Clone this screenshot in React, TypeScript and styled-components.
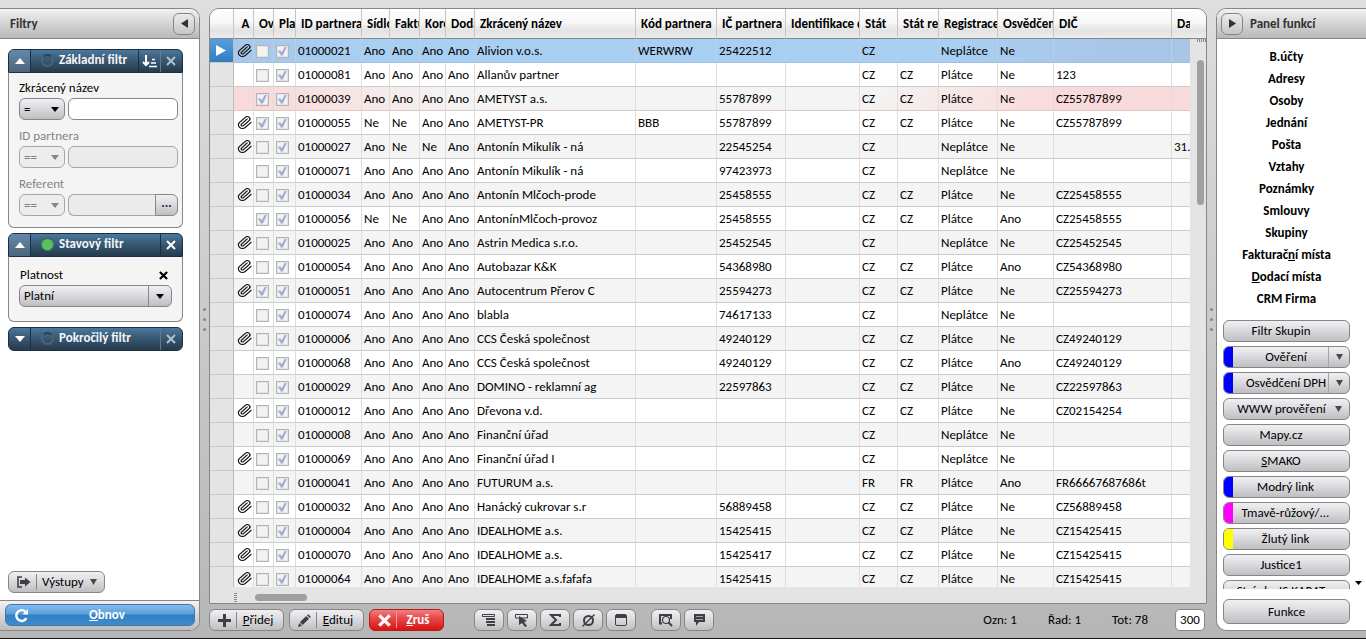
import React from 'react';
import styled, { createGlobalStyle, css } from 'styled-components';

const GlobalStyle = createGlobalStyle`
  *, *::before, *::after { box-sizing: border-box; }
  body { margin: 0; }
  body, button, input, select {
    font-family: Calibri, Carlito, Lato, sans-serif;
    font-size: 13px;
    line-height: 16px;
    color: #000;
  }
`;

const raised = css`
  border: 1px solid #868686;
  border-radius: 6px;
  background: linear-gradient(#f0eff2, #dedde1 40%, #bfbec1);
`;

const Shell = styled.div`
  display: flex;
  height: 100vh;
  min-height: 500px;
  padding: 8px 0 7px;
  background: linear-gradient(#dedede, #b6b6b6);
  border-bottom: 1px solid #151515;
  overflow: hidden;
`;

/* ---------- side panels ---------- */

const Panel = styled.aside<{ $side: 'left' | 'right' }>`
  flex: none;
  display: flex;
  flex-direction: column;
  width: ${p => (p.$side === 'left' ? 200 : 150)}px;
  background: #fff;
  border: 1px solid #868686;
  overflow: hidden;
  ${p => (p.$side === 'left'
    ? 'border-left: 0; border-radius: 0 10px 10px 0;'
    : 'border-right: 0; border-radius: 10px 0 0 10px;')}
`;

const PanelHeader = styled.header<{ $side: 'left' | 'right' }>`
  flex: none;
  display: flex;
  align-items: center;
  justify-content: ${p => (p.$side === 'left' ? 'space-between' : 'flex-start')};
  gap: 7px;
  height: 30px;
  padding: ${p => (p.$side === 'left' ? '0 4px 0 10px' : '0 4px')};
  border-bottom: 1px solid #868686;
  background: linear-gradient(#f2f2f2, #dcdcdc 35%, #b9b9b9);
`;

const PanelTitle = styled.h2`
  margin: 0;
  font-size: 13px;
  color: #333;
`;

const CollapseButton = styled.button`
  display: grid;
  place-items: center;
  width: 22px;
  height: 22px;
  padding: 0;
  border: 1px solid #868686;
  border-radius: 6px;
  background: linear-gradient(#ebebeb, #c6c6c6);
`;

const Splitter = styled.div`
  flex: none;
  display: flex;
  flex-direction: column;
  align-items: center;
  justify-content: center;
  gap: 7px;
  width: 9px;
`;

const Dot = styled.i`
  width: 3px;
  height: 3px;
  border-radius: 50%;
  background: #858585;
`;

/* ---------- filters ---------- */

const FilterList = styled.div`
  flex: 1;
  min-height: 0;
  display: flex;
  flex-direction: column;
  gap: 5px;
  padding: 10px 16px 0 8px;
  overflow: hidden;
`;

const FilterCard = styled.section`
  flex: none;
`;

const FilterHead = styled.header<{ $closed?: boolean }>`
  display: flex;
  height: 24px;
  border: 1px solid #1b2f41;
  border-radius: ${p => (p.$closed ? '6px' : '6px 6px 0 0')};
  background: linear-gradient(#4b789d, #3b5c78 40%, #263b4d);
  overflow: hidden;
`;

const HeadButton = styled.button<{ $edge: 'left' | 'right'; $lit?: boolean; $soft?: boolean }>`
  flex: none;
  display: grid;
  place-items: center;
  width: 22px;
  padding: 0 ${p => (p.$edge === 'right' ? 1 : 0)}px 0 0;
  border: 0;
  ${p => `border-${p.$edge === 'left' ? 'right' : 'left'}: 1px solid ${p.$soft ? '#66798a' : '#1b2f41'};`}
  background: ${p => (p.$lit ? 'linear-gradient(#648aab, #4c657c)' : 'transparent')};
`;

const HeadTitle = styled.h3`
  flex: 1;
  display: flex;
  align-items: center;
  gap: 5px;
  margin: 0;
  padding: 0 0 2px 10px;
  font-size: 13px;
  white-space: nowrap;
  color: #f2f5f8;
`;

const Lamp = styled.span<{ $on?: boolean }>`
  flex: none;
  width: 13px;
  height: 13px;
  border-radius: 50%;
  border: ${p => (p.$on ? 1 : 2)}px solid ${p => (p.$on ? '#3f7f62' : '#4f6474')};
  border-top-color: ${p => (p.$on ? '#33604f' : '#2b4153')};
  background: ${p => (p.$on ? '#5cc063' : 'transparent')};
`;

const FilterBody = styled.div<{ $roomy?: boolean }>`
  display: flex;
  flex-direction: column;
  gap: ${p => (p.$roomy ? 0 : 6)}px;
  padding: ${p => (p.$roomy ? '8px 10px 14px' : '5px 4px 11px 10px')};
  border: 1px solid #868686;
  border-top: 0;
  border-radius: 0 0 6px 6px;
  background: #f4f4f4;
`;

const FieldLabel = styled.label<{ $muted?: boolean }>`
  display: block;
  line-height: 20px;
  color: ${p => (p.$muted ? '#858585' : '#000')};
`;

const FieldTitleRow = styled.div`
  display: flex;
  align-items: center;
  justify-content: space-between;
  padding: 0 4px 0 1px;
`;

const PlainButton = styled.button`
  display: grid;
  place-items: center;
  padding: 0;
  border: 0;
  background: none;
`;

const FieldRow = styled.div`
  display: flex;
  gap: 3px;
`;

const SelectBox = styled.span<{ $muted?: boolean; $wide?: boolean }>`
  display: grid;
  grid-template-columns: 1fr ${p => (p.$wide ? 23 : 18)}px;
  flex: none;
  width: ${p => (p.$wide ? '100%' : '46px')};
  height: 22px;
  ${raised}
  ${p => p.$muted && 'background: #ededed; border-color: #a5a5a5;'}
`;

const Select = styled.select<{ $muted?: boolean }>`
  grid-area: 1 / 1 / 2 / 3;
  min-width: 0;
  padding: 0 0 0 4px;
  border: 0;
  appearance: none;
  background: none;
  opacity: 1;
  color: ${p => (p.$muted ? '#808080' : '#000')};
`;

const SelectCaret = styled.span<{ $split?: boolean }>`
  grid-area: 1 / 2;
  display: grid;
  place-items: center;
  pointer-events: none;
  border-left: ${p => (p.$split ? '1px solid #868686' : '0')};
`;

const TextInput = styled.input<{ $joined?: boolean }>`
  flex: 1;
  min-width: 0;
  height: 22px;
  padding: 0 4px;
  border: 1px solid #868686;
  border-radius: ${p => (p.$joined ? '6px 0 0 6px' : '6px')};
  background: #fff;
  &:disabled { background: #ebebeb; border-color: #a5a5a5; }
  ${p => p.$joined && '&&& { border-right: 0; }'}
`;

const JoinedField = styled.span`
  flex: 1;
  min-width: 0;
  display: flex;
`;

const MoreButton = styled.button`
  ${raised}
  width: 23px;
  height: 22px;
  padding: 0 0 4px;
  border-radius: 0 6px 6px 0;
  font-weight: bold;
  color: #26265c;
`;

const Outputs = styled.div`
  flex: none;
  padding: 0 8px 7px;
`;

const OutputsButton = styled.button`
  ${raised}
  display: flex;
  align-items: center;
  height: 22px;
  padding: 0 7px;
`;

const Divided = styled.span`
  margin: 0 6px 0 4px;
  padding-left: 5px;
  border-left: 1px solid #868686;
`;

const PanelFooter = styled.footer`
  flex: none;
  padding: 3px 4px 4px 5px;
  border-top: 1px solid #868686;
  background: linear-gradient(#f2f2f2, #bdbdbd);
`;

const RefreshButton = styled.button`
  display: grid;
  grid-template-columns: 16px 1fr;
  align-items: center;
  width: 100%;
  height: 22px;
  padding: 0 10px 0 8px;
  border: 1px solid #3f76a8;
  border-radius: 6px;
  background: linear-gradient(#82bbea, #5b9fda 45%, #3180c4 50%, #3e8ccd);
  color: #fff;
  font-weight: bold;
`;

/* ---------- data grid ---------- */

const Main = styled.main`
  flex: 1;
  min-width: 0;
  display: flex;
  flex-direction: column;
  gap: 5px;
`;

const GridFrame = styled.div`
  flex: 1;
  min-height: 0;
  display: grid;
  grid-template: minmax(0, 1fr) 16px / minmax(0, 1fr) 16px;
  border: 1px solid #868686;
  border-radius: 10px 10px 0 0;
  background: #e4e4e4;
  overflow: hidden;
`;

const headFill = 'linear-gradient(#fff, #f7f7f7 45%, #e3e3e3 75%, #ececec)';

const TableClip = styled.div`
  overflow: hidden;
`;

const Table = styled.table`
  width: 100%;
  min-width: 970px;
  table-layout: fixed;
  border-collapse: separate;
  border-spacing: 0;
`;

const Th = styled.th<{ $center?: boolean }>`
  height: 30px;
  padding: ${p => (p.$center ? '0 0 0 4px' : '0 0 0 5px')};
  text-align: ${p => (p.$center ? 'center' : 'left')};
  white-space: nowrap;
  overflow: hidden;
  border-right: 1px solid #c6c6c6;
  border-bottom: 1px solid #868686;
  background: ${headFill};
  &:last-child { border-right: 0; }
`;

const rowFill = {
  selected: 'radial-gradient(ellipse 50% 400% at 46% 10%, #a8cff1 60%, #a9c5e6 95%)',
  alert: 'radial-gradient(ellipse 48% 400% at 46% 10%, #f4f4f4 44%, #f9dada 85%)',
};

const Tr = styled.tr<{ $tone?: 'selected' | 'alert' }>`
  background: #fff;
  &:nth-child(odd) { background: #f4f4f4; }
  &&& { ${p => p.$tone && `background: ${rowFill[p.$tone]};`} }
`;

const Td = styled.td<{ $tone?: 'selected' | 'alert' }>`
  height: 24px;
  padding: 0 0 0 2px;
  white-space: nowrap;
  overflow: hidden;
  border-right: 1px solid ${p => (p.$tone === 'selected' ? '#b4d1eb' : '#dedede')};
  border-bottom: 1px solid ${p => (p.$tone === 'selected' ? '#9dbfe0' : p.$tone === 'alert' ? '#dcc8c8' : '#cbcbcb')};
  &:last-child { border-right: 0; }
`;

const RowHead = styled.td<{ $current?: boolean }>`
  height: 24px;
  padding: 0 0 0 6px;
  border-right: 1px solid #bdbdbd;
  border-bottom: 1px solid #cbcbcb;
  background: ${p => (p.$current ? 'linear-gradient(#58a0dc, #2f7cc0)' : '#e4e4e4')};
`;

const Check = styled.input`
  display: grid;
  place-items: center;
  width: 13px;
  height: 13px;
  margin: 1px 0 0;
  appearance: none;
  border: 1px solid #b1b5b4;
  background: #f2f2f2;
  box-shadow: inset 0 0 0 1px #e4e4e4;
  &:checked::before {
    content: '';
    width: 9px;
    height: 9px;
    background: #a3aed6;
    clip-path: polygon(0 48%, 24% 42%, 42% 62%, 78% 0, 100% 4%, 54% 100%, 32% 100%);
  }
`;

const ClipIcon = styled.svg`
  display: block;
  margin-left: 1px;
`;

const Rail = styled.div`
  display: flex;
  flex-direction: column;
  align-items: flex-end;
`;

const RailHead = styled.div`
  flex: none;
  width: 100%;
  height: 30px;
  border-bottom: 1px solid #868686;
  background: ${headFill};
`;

const RailGrip = styled.span`
  width: 9px;
  height: 3px;
  background: repeating-linear-gradient(90deg, #8a8a8a 0 1px, transparent 1px 2px);
`;

const VThumb = styled.span`
  width: 7px;
  height: 145px;
  margin: 18px 2px 0 0;
  border-radius: 4px;
  background: #a0a0a0;
`;

const BottomRail = styled.div`
  grid-column: 1 / 3;
  display: flex;
  align-items: center;
  padding-left: 24px;
`;

const BottomGrip = styled.span`
  width: 3px;
  height: 9px;
  margin: 4px 18px 0 0;
  background: repeating-linear-gradient(#8a8a8a 0 1px, transparent 1px 2px);
`;

const HThumb = styled.span`
  width: 52px;
  height: 7px;
  margin-top: 4px;
  border-radius: 4px;
  background: #a0a0a0;
`;

/* ---------- bottom toolbar ---------- */

const Toolbar = styled.div`
  flex: none;
  display: flex;
  align-items: center;
  justify-content: space-between;
  height: 22px;
  padding-right: 2px;
`;

const ToolGroups = styled.div`
  display: flex;
`;

const ToolGroup = styled.div<{ $gap: number; $after?: number }>`
  display: flex;
  gap: ${p => p.$gap}px;
  margin-right: ${p => p.$after ?? 0}px;
`;

const ActionButton = styled.button<{ $danger?: boolean }>`
  ${raised}
  display: grid;
  grid-template-columns: 26px 1fr;
  align-items: center;
  width: 75px;
  height: 22px;
  padding: 0;
  ${p => p.$danger && `
    border-color: #b21c1c;
    background: linear-gradient(#f08080, #e84848 40%, #d81414);
    color: #fff;
    font-weight: bold;
  `}
`;

const ActionIcon = styled.span`
  display: grid;
  place-items: center;
  padding-left: 3px;
`;

const ActionText = styled.span<{ $danger?: boolean }>`
  padding-right: 4px;
  border-left: 1px solid ${p => (p.$danger ? '#f0a0a0' : '#868686')};
`;

const IconButton = styled.button`
  ${raised}
  display: grid;
  place-items: center;
  width: 30px;
  height: 22px;
  padding: 0;
`;

const Stats = styled.div`
  display: flex;
  align-items: center;
  gap: 27px;
`;

const Totals = styled.div`
  display: flex;
  gap: 31px;
`;

const CountInput = styled.input`
  width: 30px;
  height: 22px;
  padding: 0 0 2px;
  border: 1px solid #868686;
  border-radius: 5px;
  text-align: center;
  background: #fff;
`;

/* ---------- function panel ---------- */

const LinkList = styled.nav`
  flex: none;
  display: flex;
  flex-direction: column;
  align-items: center;
  padding: 7px 10px 10px 0;
`;

const PanelLink = styled.a`
  line-height: 22px;
  font-weight: bold;
  color: #000;
  text-decoration: none;
`;

const ButtonArea = styled.div`
  flex: 1;
  min-height: 0;
  display: flex;
  padding-left: 6px;
  overflow: hidden;
`;

const ButtonColumn = styled.div`
  flex: 1;
  display: flex;
  flex-direction: column;
  gap: 4px;
  overflow: hidden;
`;

const ScrollHint = styled.span`
  flex: none;
  align-self: flex-end;
  width: 16px;
  padding: 0 0 4px 5px;
`;

const FunctionButton = styled.button<{ $stripe?: string }>`
  ${raised}
  flex: none;
  display: flex;
  width: 100%;
  height: 22px;
  padding: 0;
  overflow: hidden;
  ${p => p.$stripe && css`
    &::before {
      content: '';
      align-self: stretch;
      flex: none;
      width: 9px;
      background: ${p.$stripe};
    }
  `}
`;

const FunctionText = styled.span<{ $menu?: boolean }>`
  flex: 1;
  align-self: center;
  padding: ${p => (p.$menu ? '0 0 0 11px' : '0 11px 0 0')};
  white-space: nowrap;
`;

const MenuCaret = styled.span<{ $split?: boolean }>`
  flex: none;
  align-self: stretch;
  display: grid;
  place-items: center;
  width: 21px;
  border-left: ${p => (p.$split ? '1px solid #a5a5a5' : '0')};
`;

const MainFunction = styled.button`
  ${raised}
  flex: none;
  height: 25px;
  margin: 10px 16px 6px 6px;
  padding: 0;
`;

/* ---------- icons ---------- */

const Tri = ({ dir, color = '#000', w = 8, h = 5 }: { dir: 'up' | 'down' | 'left' | 'right'; color?: string; w?: number; h?: number }) => {
  const points = {
    up: `0,${h} ${w},${h} ${w / 2},0`,
    down: `0,0 ${w},0 ${w / 2},${h}`,
    left: `${w},0 ${w},${h} 0,${h / 2}`,
    right: `0,0 ${w},${h / 2} 0,${h}`,
  }[dir];
  return <svg width={w} height={h} display="block"><polygon points={points} fill={color} /></svg>;
};

const Cross = ({ color, size = 10, weight = 2 }: { color: string; size?: number; weight?: number }) => (
  <svg width={size} height={size} viewBox="0 0 10 10" display="block">
    <path d="M1 1L9 9M9 1L1 9" stroke={color} strokeWidth={weight} fill="none" />
  </svg>
);

const Paperclip = () => (
  <ClipIcon width="15" height="13" viewBox="1 1 22 22" preserveAspectRatio="none" fill="none" stroke="#111" strokeWidth="1.8" strokeLinecap="round">
    <path d="m16 6-8.414 8.586a2 2 0 0 0 2.829 2.829l8.414-8.586a4 4 0 1 0-5.657-5.657l-8.379 8.551a6 6 0 1 0 8.485 8.485l8.379-8.551" />
  </ClipIcon>
);

const ink = '#3f3f42';

/* ---------- data ---------- */

type Row = {
  clip?: boolean; ov?: boolean; id: string; sidlo?: string; fakt?: string; kor?: string;
  name: string; kod?: string; ic?: string; stat: string; reg?: string; tax: boolean; osv?: boolean; dic?: string; date?: string;
};

const rows: Row[] = [
  { clip: true, id: '01000021', name: 'Alivion v.o.s.', kod: 'WERWRW', ic: '25422512', stat: 'CZ', tax: false },
  { id: '01000081', name: 'Allanův partner', stat: 'CZ', reg: 'CZ', tax: true, dic: '123' },
  { ov: true, id: '01000039', name: 'AMETYST a.s.', ic: '55787899', stat: 'CZ', reg: 'CZ', tax: true, dic: 'CZ55787899' },
  { clip: true, ov: true, id: '01000055', sidlo: 'Ne', fakt: 'Ne', name: 'AMETYST-PR', kod: 'BBB', ic: '55787899', stat: 'CZ', reg: 'CZ', tax: true, dic: 'CZ55787899' },
  { clip: true, id: '01000027', fakt: 'Ne', kor: 'Ne', name: 'Antonín Mikulík - ná', ic: '22545254', stat: 'CZ', tax: false, date: '31.' },
  { id: '01000071', name: 'Antonín Mikulík - ná', ic: '97423973', stat: 'CZ', tax: false },
  { clip: true, id: '01000034', name: 'Antonín Mlčoch-prode', ic: '25458555', stat: 'CZ', reg: 'CZ', tax: true, dic: 'CZ25458555' },
  { ov: true, id: '01000056', sidlo: 'Ne', fakt: 'Ne', name: 'AntonínMlčoch-provoz', ic: '25458555', stat: 'CZ', reg: 'CZ', tax: true, osv: true, dic: 'CZ25458555' },
  { clip: true, id: '01000025', name: 'Astrin Medica s.r.o.', ic: '25452545', stat: 'CZ', tax: false, dic: 'CZ25452545' },
  { clip: true, id: '01000054', name: 'Autobazar K&K', ic: '54368980', stat: 'CZ', reg: 'CZ', tax: true, osv: true, dic: 'CZ54368980' },
  { clip: true, ov: true, id: '01000051', name: 'Autocentrum Přerov C', ic: '25594273', stat: 'CZ', reg: 'CZ', tax: true, dic: 'CZ25594273' },
  { id: '01000074', name: 'blabla', ic: '74617133', stat: 'CZ', tax: false },
  { clip: true, id: '01000006', name: 'CCS Česká společnost', ic: '49240129', stat: 'CZ', reg: 'CZ', tax: true, dic: 'CZ49240129' },
  { id: '01000068', name: 'CCS Česká společnost', ic: '49240129', stat: 'CZ', reg: 'CZ', tax: true, osv: true, dic: 'CZ49240129' },
  { id: '01000029', name: 'DOMINO - reklamní ag', ic: '22597863', stat: 'CZ', reg: 'CZ', tax: true, dic: 'CZ22597863' },
  { clip: true, id: '01000012', name: 'Dřevona v.d.', stat: 'CZ', reg: 'CZ', tax: true, dic: 'CZ02154254' },
  { id: '01000008', name: 'Finanční úřad', stat: 'CZ', tax: false },
  { clip: true, id: '01000069', name: 'Finanční úřad I', stat: 'CZ', tax: false },
  { id: '01000041', name: 'FUTURUM a.s.', stat: 'FR', reg: 'FR', tax: true, osv: true, dic: 'FR66667687686t' },
  { clip: true, id: '01000032', name: 'Hanácký cukrovar s.r', ic: '56889458', stat: 'CZ', reg: 'CZ', tax: true, dic: 'CZ56889458' },
  { clip: true, id: '01000004', name: 'IDEALHOME a.s.', ic: '15425415', stat: 'CZ', reg: 'CZ', tax: true, dic: 'CZ15425415' },
  { clip: true, id: '01000070', name: 'IDEALHOME a.s.', ic: '15425417', stat: 'CZ', reg: 'CZ', tax: true, dic: 'CZ15425415' },
  { clip: true, id: '01000064', name: 'IDEALHOME a.s.fafafa', ic: '15425415', stat: 'CZ', reg: 'CZ', tax: true, dic: 'CZ15425415' },
];

const columns: [string, number | undefined][] = [
  ['', 24], ['A', 20], ['Ov', 20], ['Pla', 22], ['ID partnera', 66], ['Sídlo', 28], ['Faktu', 30],
  ['Kore', 26], ['Doda', 29], ['Zkrácený název', 161], ['Kód partnera', 81], ['IČ partnera', 69],
  ['Identifikace d', 74], ['Stát', 38], ['Stát reg', 41], ['Registrace', 59], ['Osvědčen', 56],
  ['DIČ', 118], ['Da', undefined],
];

const links: React.ReactNode[] = [
  'B.účty', 'Adresy', 'Osoby', 'Jednání', 'Pošta', 'Vztahy', 'Poznámky', 'Smlouvy', 'Skupiny',
  <>Fakturač<u>n</u>í místa</>, <><u>D</u>odací místa</>, 'CRM Firma',
];

const functions: { text: React.ReactNode; stripe?: string; menu?: 'split' | 'plain' }[] = [
  { text: 'Filtr Skupin' },
  { text: 'Ověření', stripe: '#0000ff', menu: 'split' },
  { text: 'Osvědčení DPH', stripe: '#0000ff', menu: 'split' },
  { text: 'WWW prověření', menu: 'plain' },
  { text: 'Mapy.cz' },
  { text: <><u>S</u>MAKO</> },
  { text: 'Modrý link', stripe: '#0000ff' },
  { text: 'Tmavě-růžový/...', stripe: '#ff00ff' },
  { text: 'Žlutý link', stripe: '#ffff00' },
  { text: 'Justice1' },
  { text: 'Stránky IS KARAT' },
];

/* ---------- sections ---------- */

const OperatorSelect = ({ value, label, muted }: { value: string; label: string; muted?: boolean }) => (
  <SelectBox $muted={muted}>
    <Select aria-label={label} disabled={muted} $muted={muted} defaultValue={value}><option>{value}</option></Select>
    <SelectCaret><Tri dir="down" color={muted ? '#858585' : '#000'} /></SelectCaret>
  </SelectBox>
);

const FiltersPanel = () => (
  <Panel $side="left">
    <PanelHeader $side="left">
      <PanelTitle>Filtry</PanelTitle>
      <CollapseButton aria-label="Skrýt filtry"><Tri dir="left" color="#333" w={7} h={9} /></CollapseButton>
    </PanelHeader>
    <FilterList>
      <FilterCard>
        <FilterHead>
          <HeadButton $edge="left" $lit aria-label="Sbalit"><Tri dir="up" color="#fff" w={10} h={6} /></HeadButton>
          <HeadTitle><Lamp />Základní filtr</HeadTitle>
          <HeadButton $edge="right" aria-label="Řazení">
            <svg width="15" height="14" viewBox="0 0 15 14" fill="none" stroke="#fff" strokeWidth="2">
              <path d="M4 1V11M1 8L4 11L7 8" /><path d="M10 5.5H13M9 9H14M7 12.5H15" strokeWidth="1.6" />
            </svg>
          </HeadButton>
          <HeadButton $edge="right" $soft aria-label="Vymazat filtr"><Cross color="#b4c0ca" /></HeadButton>
        </FilterHead>
        <FilterBody>
          <div>
            <FieldLabel htmlFor="f-name">Zkrácený název</FieldLabel>
            <FieldRow><OperatorSelect value="=" label="Operátor názvu" /><TextInput id="f-name" /></FieldRow>
          </div>
          <div>
            <FieldLabel $muted htmlFor="f-id">ID partnera</FieldLabel>
            <FieldRow><OperatorSelect value="==" label="Operátor ID" muted /><TextInput id="f-id" disabled /></FieldRow>
          </div>
          <div>
            <FieldLabel $muted htmlFor="f-ref">Referent</FieldLabel>
            <FieldRow>
              <OperatorSelect value="==" label="Operátor referenta" muted />
              <JoinedField><TextInput id="f-ref" $joined disabled /><MoreButton aria-label="Vybrat referenta">...</MoreButton></JoinedField>
            </FieldRow>
          </div>
        </FilterBody>
      </FilterCard>

      <FilterCard>
        <FilterHead>
          <HeadButton $edge="left" $lit aria-label="Sbalit"><Tri dir="up" color="#fff" w={10} h={6} /></HeadButton>
          <HeadTitle><Lamp $on />Stavový filtr</HeadTitle>
          <HeadButton $edge="right" aria-label="Vymazat filtr"><Cross color="#fff" /></HeadButton>
        </FilterHead>
        <FilterBody $roomy>
          <FieldTitleRow>
            <FieldLabel htmlFor="f-state">Platnost</FieldLabel>
            <PlainButton aria-label="Odebrat platnost"><Cross color="#000" size={9} weight={2.4} /></PlainButton>
          </FieldTitleRow>
          <SelectBox $wide>
            <Select id="f-state" defaultValue="Platní"><option>Platní</option></Select>
            <SelectCaret $split><Tri dir="down" /></SelectCaret>
          </SelectBox>
        </FilterBody>
      </FilterCard>

      <FilterCard>
        <FilterHead $closed>
          <HeadButton $edge="left" aria-label="Rozbalit"><Tri dir="down" color="#fff" w={10} h={6} /></HeadButton>
          <HeadTitle><Lamp />Pokročilý filtr</HeadTitle>
          <HeadButton $edge="right" $soft aria-label="Vymazat filtr"><Cross color="#b4c0ca" /></HeadButton>
        </FilterHead>
      </FilterCard>
    </FilterList>
    <Outputs>
      <OutputsButton>
        <svg width="16" height="12" viewBox="0 0 16 12" fill="none" stroke={ink}>
          <path d="M6 1H2V11H6" strokeWidth="1.6" /><path d="M4 6H10" strokeWidth="4" /><path d="M9 1.5L14.5 6L9 10.5Z" fill={ink} stroke="none" />
        </svg>
        <Divided>Výstupy</Divided>
        <Tri dir="down" color="#4a4a4a" w={7} h={6} />
      </OutputsButton>
    </Outputs>
    <PanelFooter>
      <RefreshButton>
        <svg width="15" height="15" viewBox="0 0 15 15" fill="none" stroke="#fff" strokeWidth="2.4">
          <path d="M12.4 10.2A5.4 5.4 0 1 1 11.4 3.6" /><path d="M14 1V6.6H8.4Z" fill="#fff" stroke="none" />
        </svg>
        <span><u>O</u>bnov</span>
      </RefreshButton>
    </PanelFooter>
  </Panel>
);

const PartnerGrid = () => (
  <GridFrame>
    <TableClip>
      <Table>
        <colgroup>{columns.map(([, w], i) => <col key={i} width={w} />)}</colgroup>
        <thead>
          <tr>{columns.map(([text], i) => <Th key={i} $center={text === 'A'}>{text}</Th>)}</tr>
        </thead>
        <tbody>
          {rows.map((r, i) => {
            const tone = i === 0 ? 'selected' : i === 2 ? 'alert' : undefined;
            const texts = [
              r.id, r.sidlo ?? 'Ano', r.fakt ?? 'Ano', r.kor ?? 'Ano', 'Ano', r.name, r.kod, r.ic, '', r.stat,
              r.reg, r.tax ? 'Plátce' : 'Neplátce', r.osv ? 'Ano' : 'Ne', r.dic, r.date,
            ];
            return (
              <Tr key={r.id} $tone={tone}>
                <RowHead $current={i === 0}>{i === 0 && <Tri dir="right" color="#fff" w={10} h={11} />}</RowHead>
                <Td $tone={tone}>{r.clip && <Paperclip />}</Td>
                <Td $tone={tone}><Check type="checkbox" disabled defaultChecked={!!r.ov} aria-label={`Ověřeno ${r.id}`} /></Td>
                <Td $tone={tone}><Check type="checkbox" disabled defaultChecked aria-label={`Platný ${r.id}`} /></Td>
                {texts.map((t, k) => <Td key={k} $tone={tone}>{t}</Td>)}
              </Tr>
            );
          })}
        </tbody>
      </Table>
    </TableClip>
    <Rail><RailHead /><RailGrip /><VThumb /></Rail>
    <BottomRail><BottomGrip /><HThumb /></BottomRail>
  </GridFrame>
);

const BottomToolbar = () => (
  <Toolbar>
    <ToolGroups>
      <ToolGroup $gap={5} $after={30}>
        <ActionButton>
          <ActionIcon><svg width="13" height="13"><path d="M6.5 0V13M0 6.5H13" stroke={ink} strokeWidth="3" /></svg></ActionIcon>
          <ActionText><u>P</u>řidej</ActionText>
        </ActionButton>
        <ActionButton>
          <ActionIcon>
            <svg width="13" height="13" viewBox="0 0 13 13" fill={ink}><path d="M0 13L1.2 9L4 11.8Z" /><path d="M1.9 8.3L8.2 2L11 4.8L4.7 11.1Z" /><path d="M9 1.3L10.2 .2L12.8 2.8L11.7 4Z" /></svg>
          </ActionIcon>
          <ActionText><u>E</u>dituj</ActionText>
        </ActionButton>
        <ActionButton $danger>
          <ActionIcon><Cross color="#fff" size={13} weight={2.4} /></ActionIcon>
          <ActionText $danger><u>Z</u>ruš</ActionText>
        </ActionButton>
      </ToolGroup>
      <ToolGroup $gap={3} $after={15}>
        <IconButton aria-label="Seskupit">
          <svg width="14" height="12"><path d="M.5 .5H12.5V2.5H.5Z" fill="none" stroke={ink} /><path d="M4 5H13M4 8H13M5 11H13" stroke={ink} strokeWidth="2" /></svg>
        </IconButton>
        <IconButton aria-label="Výběr">
          <svg width="14" height="14"><path d="M.5 1.5H12.5V5H.5Z" fill="none" stroke={ink} /><path d="M4 3L12 8L9 9L12 13L10 14L7 10L4 12Z" fill={ink} /></svg>
        </IconButton>
        <IconButton aria-label="Součet">
          <svg width="12" height="12"><path d="M11 3V1H2L7 6L2 11H11V9" fill="none" stroke={ink} strokeWidth="2" /></svg>
        </IconButton>
        <IconButton aria-label="Průměr">
          <svg width="13" height="13"><circle cx="6.5" cy="6.5" r="4.5" fill="none" stroke={ink} strokeWidth="2" /><path d="M.5 12.5L12.5 .5" stroke={ink} strokeWidth="1.4" /></svg>
        </IconButton>
        <IconButton aria-label="Okno">
          <svg width="13" height="12"><rect x=".5" y=".5" width="11" height="11" rx="1.5" fill="none" stroke={ink} /><path d="M1 2.5H11" stroke={ink} strokeWidth="3" /></svg>
        </IconButton>
      </ToolGroup>
      <ToolGroup $gap={3}>
        <IconButton aria-label="Hledat">
          <svg width="14" height="13" fill="none" stroke={ink}><path d="M3 9.5H1V1H12V5" strokeWidth="2" /><circle cx="7" cy="6" r="3.5" strokeWidth="1.2" /><path d="M9.5 8.5L13 12" strokeWidth="2" /></svg>
        </IconButton>
        <IconButton aria-label="Komentář">
          <svg width="13" height="12"><path d="M1 0H12V8H6L3 12V8H1Z" fill={ink} /><path d="M3 2.5H10M3 5.5H10" stroke="#a4a4a8" /></svg>
        </IconButton>
      </ToolGroup>
    </ToolGroups>
    <Stats>
      <Totals>
        <span>Ozn: 1</span>
        <span>Řad: 1</span>
        <span>Tot: 78</span>
      </Totals>
      <CountInput aria-label="Počet řádků" defaultValue="300" />
    </Stats>
  </Toolbar>
);

const FunctionsPanel = () => (
  <Panel $side="right">
    <PanelHeader $side="right">
      <CollapseButton aria-label="Skrýt panel"><Tri dir="right" color="#333" w={7} h={9} /></CollapseButton>
      <PanelTitle>Panel funkcí</PanelTitle>
    </PanelHeader>
    <LinkList>{links.map((l, i) => <PanelLink key={i} href="#">{l}</PanelLink>)}</LinkList>
    <ButtonArea>
      <ButtonColumn>
        {functions.map((f, i) => (
          <FunctionButton key={i} $stripe={f.stripe}>
            <FunctionText $menu={!!f.menu}>{f.text}</FunctionText>
            {f.menu && <MenuCaret $split={f.menu === 'split'}><Tri dir="down" color="#4a4a4a" w={7} h={6} /></MenuCaret>}
          </FunctionButton>
        ))}
      </ButtonColumn>
      <ScrollHint><Tri dir="down" w={7} h={4} /></ScrollHint>
    </ButtonArea>
    <MainFunction>Funkce</MainFunction>
  </Panel>
);

export default function App() {
  return (
    <>
      <GlobalStyle />
      <Shell>
        <FiltersPanel />
        <Splitter><Dot /><Dot /><Dot /></Splitter>
        <Main>
          <PartnerGrid />
          <BottomToolbar />
        </Main>
        <Splitter><Dot /><Dot /><Dot /></Splitter>
        <FunctionsPanel />
      </Shell>
    </>
  );
}
